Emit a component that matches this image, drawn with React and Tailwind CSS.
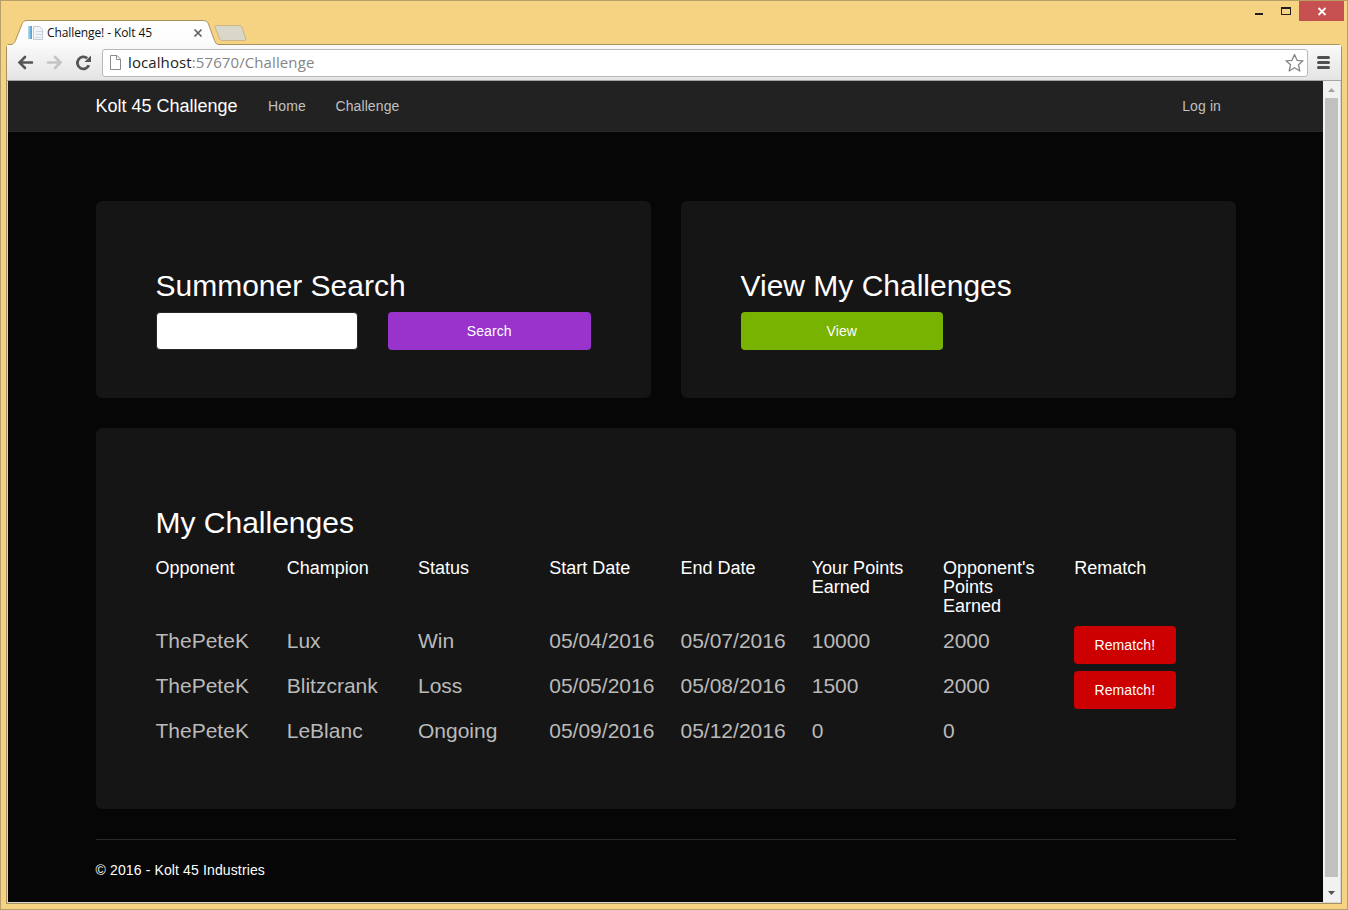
const challenges = [
  ["ThePeteK", "Lux", "Win", "05/04/2016", "05/07/2016", "10000", "2000", true],
  ["ThePeteK", "Blitzcrank", "Loss", "05/05/2016", "05/08/2016", "1500", "2000", true],
  ["ThePeteK", "LeBlanc", "Ongoing", "05/09/2016", "05/12/2016", "0", "0", false],
];

const headers = [
  "Opponent",
  "Champion",
  "Status",
  "Start Date",
  "End Date",
  "Your Points Earned",
  "Opponent's Points Earned",
  "Rematch",
];

function TitleBar() {
  return (
    <div className="relative flex h-[44px] shrink-0 items-start justify-end">
      <svg className="absolute left-0 top-0 z-10" width="1346" height="44" viewBox="1 1 1346 44">
        <defs>
          <linearGradient id="tab" x1="0" y1="0" x2="0" y2="1">
            <stop offset="0" stopColor="#ffffff" />
            <stop offset="1" stopColor="#fafafa" />
          </linearGradient>
          <linearGradient id="doc" x1="0" y1="0" x2="1" y2="0">
            <stop offset="0" stopColor="#b9dcf2" />
            <stop offset="1" stopColor="#4b9bd0" />
          </linearGradient>
        </defs>
        <path d="M6.500 50V47C6.500 45.500 7.500 44.500 9 44.500H11C13 44.500 14.500 43 15.500 40.500L22 24C23 21.500 24 20.500 27 20.500H202C206 20.500 207.500 21.500 208.500 24L214.500 40.500C215.500 43 216.500 44.500 219 44.500H1338C1340 44.500 1341.500 45.500 1341.500 48V50Z" fill="url(#tab)" stroke="#a8915c" />
        <path d="M217 25.500H239C240.500 25.500 241.500 26.200 242 27.500L245.500 38C246 39.700 245.500 40.500 244 40.500H223C221 40.500 220 40 219.300 38L215.300 28C214.700 26.300 215.300 25.500 217 25.500Z" fill="#d9d6ca" stroke="#c9b586" />
        <rect x="28" y="26" width="4" height="13" fill="url(#doc)" />
        <path d="M33.500 26.500H39.500L42.500 29.500V39.500H33.500Z" fill="#f1f5f9" stroke="#c3cbd3" />
        <path d="M36 31.500H42M36 34.500H42M35 37.500H41" stroke="#cfd8e0" />
        <path d="M194.500 29.500L201.500 36.500M201.500 29.500L194.500 36.500" stroke="#606060" strokeWidth="1.700" />
        <rect x="1255" y="13" width="8" height="2" fill="#1f1f1f" />
        <path d="M1281 7H1291V15H1281ZM1282 9V14H1290V9Z" fill="#1f1f1f" fillRule="evenodd" />
        <rect x="1299" y="1" width="45" height="20" fill="#c75050" />
        <path d="M1318.500 8L1325.500 15M1325.500 8L1318.500 15" stroke="#fff" strokeWidth="1.800" />
      </svg>
      <span className="absolute left-[46px] top-[23px] z-20 whitespace-nowrap font-['Open_Sans',sans-serif] text-[12px] leading-[18px] tracking-[-0.1px] text-[#111]">
        Challenge! - Kolt 45
      </span>
    </div>
  );
}

function Toolbar() {
  return (
    <div className="flex h-[36px] shrink-0 items-start border-b border-[#a5a5a5] bg-linear-to-b from-[#fafafa] to-[#e4e4e4] pt-[4px]">
      <svg width="95" height="28" viewBox="7 49 95 28" className="shrink-0" fill="none">
        <path d="M32 62.500H20M25 57L19.500 62.500L25 68" stroke="#555" strokeWidth="2.600" strokeLinecap="round" />
        <path d="M48 62.500H60M55 57L60.500 62.500L55 68" stroke="#c4c4c4" strokeWidth="2.600" strokeLinecap="round" />
        <path d="M88.900 65.300A6 6 0 1 1 87.300 58.300" stroke="#555" strokeWidth="2.800" />
        <path d="M91 55.500V62H84.500Z" fill="#555" />
      </svg>
      <div className="flex h-[28px] w-[1206px] shrink-0 items-center rounded-[3px] border border-[#b9b9b9] bg-white">
        <svg width="25" height="26" viewBox="103 50 25 26" fill="none" className="shrink-0">
          <path d="M110.500 55.500H117L120.500 59V69.500H110.500ZM116.500 55.500V59.500H120.500" stroke="#8b8b8b" />
        </svg>
        <span className="-mt-[2px] grow whitespace-nowrap font-['Open_Sans',sans-serif] text-[15px] leading-[24px] tracking-[0.1px] text-[#858585]">
          <span className="text-[#222]">localhost</span>:57670/Challenge
        </span>
        <svg width="22" height="24" viewBox="1285 51 22 24" fill="none" className="shrink-0">
          <path d="M1294.500 54.500L1297 60.300L1303 60.800L1298.500 64.800L1299.800 71L1294.500 67.800L1289.200 71L1290.500 64.800L1286 60.800L1292 60.300Z" stroke="#858585" strokeWidth="1.300" strokeLinejoin="round" />
        </svg>
      </div>
      <svg width="32" height="28" viewBox="1308 49 32 28" className="shrink-0">
        <path d="M1318.500 57.500H1328.500M1318.500 62.500H1328.500M1318.500 67.500H1328.500" stroke="#505050" strokeWidth="3" strokeLinecap="round" />
      </svg>
    </div>
  );
}

function Scrollbar() {
  return (
    <div className="flex w-[17px] shrink-0 flex-col items-center bg-[#f1f1f1]">
      <svg width="17" height="17" viewBox="0 0 17 17">
        <path d="M5 11L8.500 7L12 11Z" fill="#a3a3a3" />
      </svg>
      <div className="w-[13px] grow bg-[#c1c1c1]" />
      <svg width="17" height="25" viewBox="0 0 17 25">
        <path d="M5 14L8.500 18L12 14Z" fill="#505050" />
      </svg>
    </div>
  );
}

function Button({ children, className }) {
  return (
    <button className={`h-[38px] rounded-[4px] text-center text-[14px] leading-[20px] tracking-[0.1px] text-white ${className}`}>
      {children}
    </button>
  );
}

export default function App() {
  return (
    <div className="flex h-[910px] w-[1348px] flex-col overflow-hidden border border-[#b79f68] bg-[#f6d283] font-['Liberation_Sans',Arial,sans-serif]">
      <TitleBar />
      <div className="ml-[5px] flex h-[859px] w-[1336px] flex-col rounded-t-[3px] border-x border-b border-[#a8915c]">
        <Toolbar />
        <div className="flex min-h-0 grow border-x border-b border-[#d9d9d9]">
          <div className="min-w-0 grow bg-[#060606] text-white">
            <nav className="flex h-[51px] items-center border-b border-[#282828] bg-[#222] pl-[87.500px] pr-[102px] text-[14px] tracking-[0.11px] text-[#c0c0c0]">
              <span className="text-[18px] tracking-normal text-white">Kolt 45 Challenge</span>
              <span className="ml-[30.500px]">Home</span>
              <span className="ml-[29.500px]">Challenge</span>
              <span className="ml-auto">Log in</span>
            </nav>
            <main className="mx-auto w-[1140px] pt-[69px]">
              <div className="grid grid-cols-2 gap-[30px]">
                <section className="h-[197px] rounded-[6px] bg-[#151515] px-[60px] pt-[68px]">
                  <h2 className="text-[30px] leading-[33px]">Summoner Search</h2>
                  <div className="mt-[10px] grid grid-cols-2 gap-[30px]">
                    <input aria-label="Summoner" className="h-[38px] w-full rounded-[4px] border border-[#282828] bg-white px-3 text-[14px] text-[#888]" />
                    <Button className="w-full bg-[#9933cc]">Search</Button>
                  </div>
                </section>
                <section className="h-[197px] rounded-[6px] bg-[#151515] px-[60px] pt-[68px]">
                  <h2 className="text-[30px] leading-[33px]">View My Challenges</h2>
                  <div className="mt-[10px] grid grid-cols-2 gap-[30px]">
                    <Button className="w-full bg-[#77b300]">View</Button>
                  </div>
                </section>
              </div>
              <section className="mt-[30px] h-[381px] rounded-[6px] bg-[#151515] px-[60px] pt-[78px]">
                <h2 className="text-[30px] leading-[33px]">My Challenges</h2>
                <div className="mt-[20px] grid h-[67px] grid-cols-8 gap-x-[30px]">
                  {headers.map((header) => (
                    <h4 key={header} className="text-[18px] leading-[19px]">{header}</h4>
                  ))}
                </div>
                {challenges.map(([opponent, champion, status, start, end, yours, theirs, rematch]) => (
                  <div key={start} className="grid h-[45px] grid-cols-8 gap-x-[30px] text-[21px] leading-[30px] text-[#bababa]">
                    <span>{opponent}</span>
                    <span>{champion}</span>
                    <span>{status}</span>
                    <span>{start}</span>
                    <span>{end}</span>
                    <span>{yours}</span>
                    <span>{theirs}</span>
                    {rematch && <Button className="w-full bg-[#cc0000]">Rematch!</Button>}
                  </div>
                ))}
              </section>
              <hr className="mt-[30px] border-t border-[#282828]" />
              <footer className="mt-[20px] text-[14px] leading-[20px] tracking-[0.13px]">© 2016 - Kolt 45 Industries</footer>
            </main>
          </div>
          <Scrollbar />
        </div>
      </div>
    </div>
  );
}
